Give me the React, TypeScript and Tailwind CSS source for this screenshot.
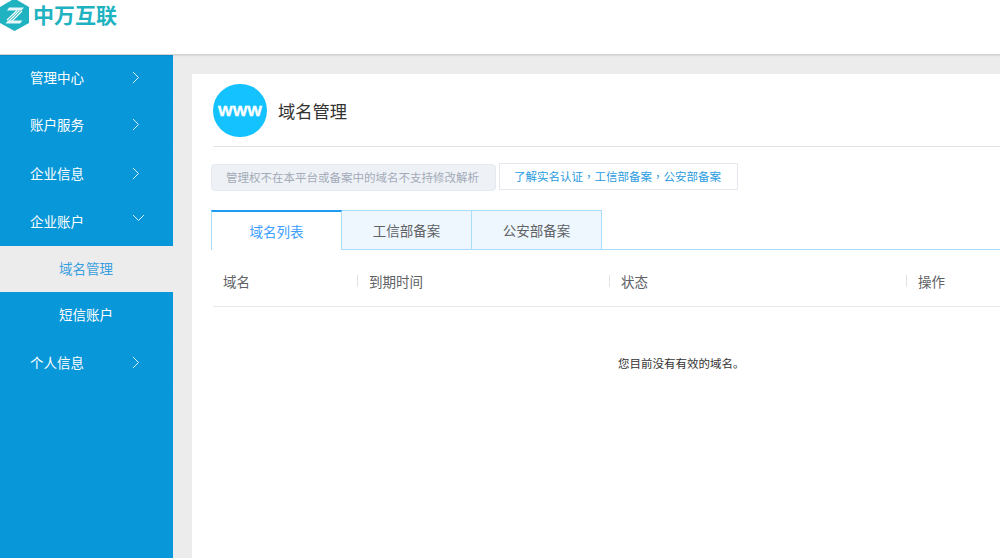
const font = { fontFamily: '"Noto Sans CJK SC", "Liberation Sans", sans-serif' };

function ChevronRight() {
  return (
    <svg width="8" height="13" viewBox="0 0 8 13" fill="none" stroke="#d5eefb" strokeWidth="1">
      <path d="M1 1l5.5 5.5L1 12" />
    </svg>
  );
}

function ChevronDown() {
  return (
    <svg width="13" height="8" viewBox="0 0 13 8" fill="none" stroke="#d5eefb" strokeWidth="1">
      <path d="M1 1l5.5 5.5L12 1" />
    </svg>
  );
}

function Logo() {
  return (
    <svg width="29" height="32" viewBox="0 0 29 32" className="shrink-0">
      <path d="M14.5 -1.5L29 7V23L14.5 31L0 23V7Z" fill="#1fb2c1" />
      <path d="M9 7.5H24L21.5 10.5H7Z" fill="#e8f8fa" />
      <path d="M7 20L17 10.5M9 21L19.5 10.5M11.5 21.5L22 11" stroke="#ffffff" strokeWidth="1.1" fill="none" />
      <path d="M5.5 23.5L8 20.5H22.5L20 23.5Z" fill="#e8f8fa" />
    </svg>
  );
}

function NavItem({ label, open, h = "h-12", pb = "" }: { label: string; open?: boolean; h?: string; pb?: string }) {
  return (
    <div className={`${h} ${pb} flex items-center justify-between border-b border-[#0894d5] pl-[30px] pr-[33px] text-[13.5px] text-white`}>
      <span>{label}</span>
      {open ? (
        <span className="-mr-[5px] -mt-[6px] flex"><ChevronDown /></span>
      ) : (
        <span className="flex"><ChevronRight /></span>
      )}
    </div>
  );
}

function Tab({ label, active }: { label: string; active?: boolean }) {
  return active ? (
    <div className="-mb-px flex h-10 w-[131px] items-center justify-center border-x border-t-2 border-x-[#a9dcfb] border-t-[#1e9bf0] bg-white text-[13.5px] text-[#409eff]">
      {label}
    </div>
  ) : (
    <div className="flex h-[39px] w-[130px] items-center justify-center border-r border-t border-[#a9dcfb] bg-[#eef7fe] text-[13.5px] text-[#606266]">
      {label}
    </div>
  );
}

function Head({ label, first }: { label: string; first?: boolean }) {
  return (
    <div className="flex items-center">
      {first ? (
        <span className="pl-[10px]">{label}</span>
      ) : (
        <span className="border-l border-[#e2e2e2] pl-[11px] leading-[12px]">{label}</span>
      )}
    </div>
  );
}

export default function App() {
  return (
    <div className="flex h-screen w-full flex-col overflow-hidden bg-[#ececec]" style={font}>
      <header className="z-10 flex h-[55px] shrink-0 items-start gap-1 overflow-hidden border-b border-[#d4d4d4] bg-white shadow-[0_1px_1px_rgba(0,0,0,0.08)]">
        <Logo />
        <span className="mt-[1px] text-[21px] font-bold leading-[26px] text-[#1fb2c1]">中万互联</span>
      </header>
      <div className="flex min-h-0 flex-1">
        <aside className="w-[173px] shrink-0 bg-[#0897d9]">
          <NavItem label="管理中心" h="h-[46px]" pb="pb-[1px]" />
          <NavItem label="账户服务" />
          <NavItem label="企业信息" pb="pt-[1px]" />
          <NavItem label="企业账户" open h="h-[49px]" />
          <div className="flex h-[46px] items-center bg-[#ececec] pb-[1px] pl-[59px] text-[13.5px] text-[#3a9fe0]">域名管理</div>
          <div className="flex h-[47px] items-center border-b border-[#0894d5] pb-[1px] pl-[59px] text-[13.5px] text-white">短信账户</div>
          <NavItem label="个人信息" />
        </aside>
        <main className="ml-[19px] mt-[19px] min-w-0 flex-1 bg-white">
          <div className="ml-[21px] flex h-[73px] items-center gap-[11px] border-b border-[#e3e3e3] pt-[1px]">
            <div
              className="flex h-[53px] w-[54px] shrink-0 items-center justify-center rounded-full bg-[#13c2ff] text-[15.5px] font-bold tracking-[0px] text-white [-webkit-text-stroke:0.4px_white]"
              style={{ fontFamily: '"Liberation Sans", sans-serif' }}
            >
              WWW
            </div>
            <span className="text-[17.3px] text-[#333333]">域名管理</span>
          </div>
          <div className="ml-[19px] mt-[16px] flex items-start gap-[3px]">
            <div className="mt-px flex h-[27px] w-[285px] items-center rounded-[4px] border border-[#e6e9ef] bg-[#eef1f6] pl-[14px] text-[11.5px] text-[#a3abb8]">
              管理权不在本平台或备案中的域名不支持修改解析
            </div>
            <div className="flex h-[27px] w-[239px] items-center border border-[#e4e7ed] bg-white pl-[14px] text-[11.5px] text-[#2a9be0]">
              了解实名认证<span className="font-['Noto_Sans_CJK_TC']">，</span>工信部备案<span className="font-['Noto_Sans_CJK_TC']">，</span>公安部备案
            </div>
          </div>
          <div className="ml-[19px] mt-[19px] flex border-b border-[#a9dcfb]">
            <Tab label="域名列表" active />
            <Tab label="工信部备案" />
            <Tab label="公安部备案" />
          </div>
          <div className="ml-[21px] grid h-[57px] grid-cols-[144px_252px_297px_1fr] border-b border-[#e9e9e9] pt-[6px] text-[13.5px] text-[#606266]">
            <Head label="域名" first />
            <Head label="到期时间" />
            <Head label="状态" />
            <Head label="操作" />
          </div>
          <p className="ml-[426px] mt-[48px] text-[11.5px] leading-4 text-[#333333]">您目前没有有效的域名。</p>
        </main>
      </div>
    </div>
  );
}
